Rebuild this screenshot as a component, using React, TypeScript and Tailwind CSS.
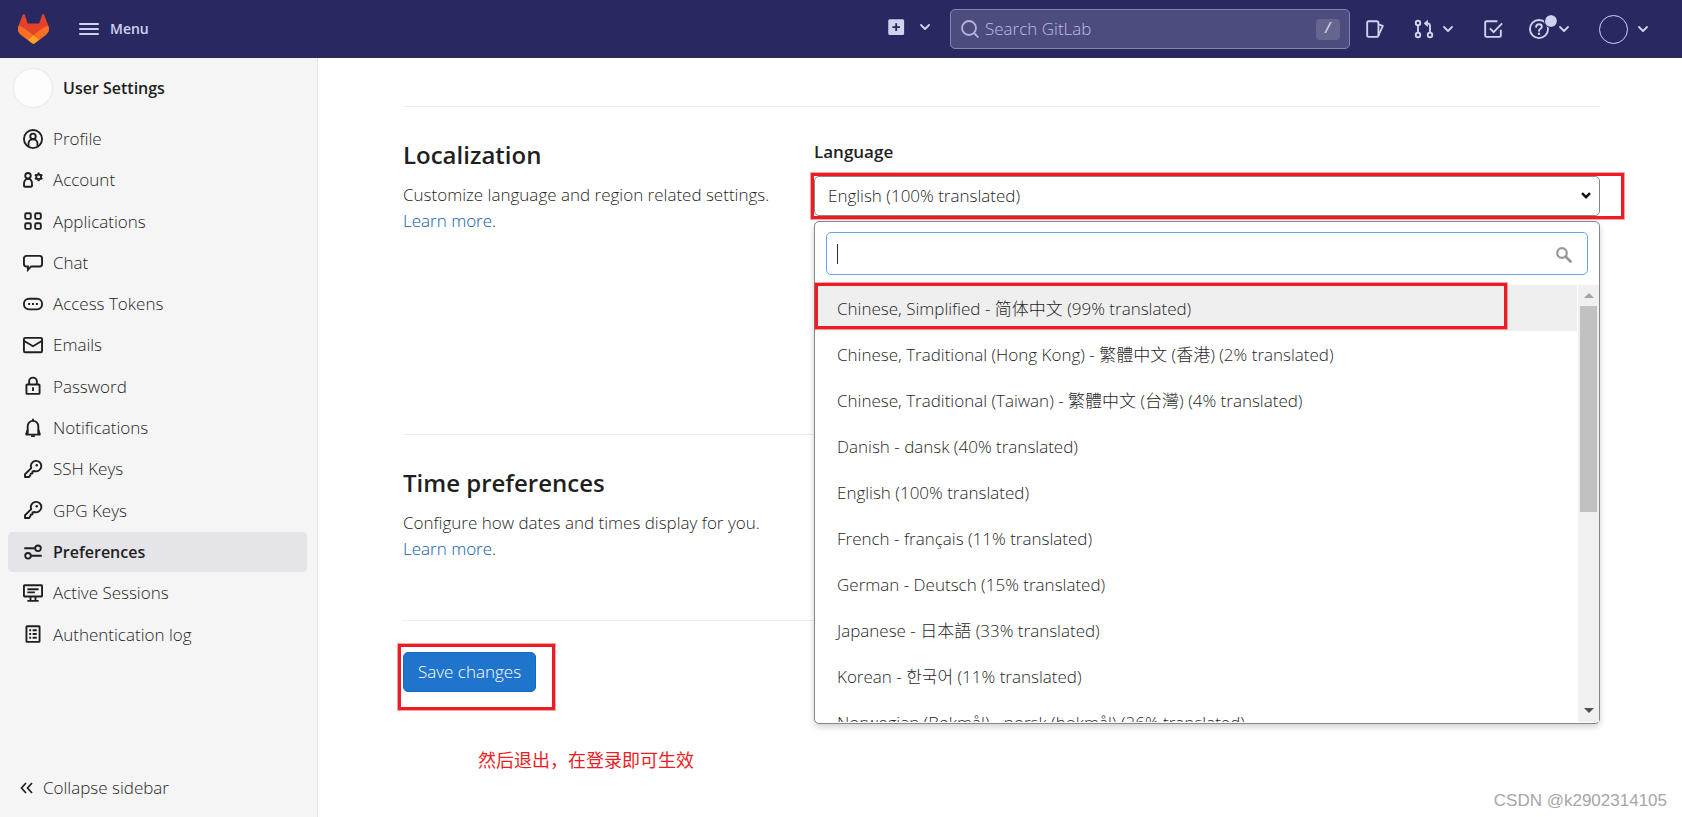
import type { ReactNode } from 'react'

interface IconProps {
  children: ReactNode
  className?: string
}

function Icon({ children, className = 'size-5' }: IconProps) {
  return (
    <svg
      viewBox="0 0 16 16"
      className={`shrink-0 ${className}`}
      fill="none"
      stroke="currentColor"
      strokeWidth="1.5"
      aria-hidden="true"
    >
      {children}
    </svg>
  )
}

function Chevron() {
  return (
    <svg viewBox="0 0 10 6" className="h-1.5 w-2.5 shrink-0" fill="none" stroke="currentColor" strokeWidth="1.8" aria-hidden="true">
      <path d="M1 1l4 4 4-4" strokeLinecap="round" strokeLinejoin="round" />
    </svg>
  )
}

function Logo() {
  return (
    <svg viewBox="0 0 25 24" className="h-[30px] w-[31px]" aria-hidden="true">
      <path
        fill="#E24329"
        d="m24.507 9.5-.034-.09L21.082.562a.896.896 0 0 0-1.694.091l-2.29 7.01H7.825L5.535.653a.898.898 0 0 0-1.694-.09L.451 9.411.416 9.5a6.297 6.297 0 0 0 2.09 7.278l.012.01.03.022 5.16 3.867 2.56 1.935 1.554 1.176a1.051 1.051 0 0 0 1.268 0l1.555-1.176 2.56-1.935 5.197-3.89.014-.01A6.297 6.297 0 0 0 24.507 9.5Z"
      />
      <path
        fill="#FC6D26"
        d="m24.507 9.5-.034-.09a11.44 11.44 0 0 0-4.56 2.051l-7.447 5.632 4.742 3.584 5.197-3.89.014-.01A6.297 6.297 0 0 0 24.507 9.5Z"
      />
      <path
        fill="#FCA326"
        d="m7.707 20.677 2.56 1.935 1.555 1.176a1.051 1.051 0 0 0 1.268 0l1.555-1.176 2.56-1.935-4.743-3.584-4.755 3.584Z"
      />
      <path
        fill="#FC6D26"
        d="M5.01 11.461a11.43 11.43 0 0 0-4.56-2.05L.416 9.5a6.297 6.297 0 0 0 2.09 7.278l.012.01.03.022 5.16 3.867 4.745-3.584-7.444-5.632Z"
      />
    </svg>
  )
}

const keyIcon = (
  <>
    <path d="M6.6 7.3A4.2 4.2 0 1 1 9 9.6L7.6 10v1.4l-1.4.4-.5 1.5-1 1.1H1.6v-2.2z" strokeLinejoin="round" />
    <circle cx="11" cy="5" r="1" fill="currentColor" stroke="none" />
  </>
)

const navItems: { label: string; icon: ReactNode; active?: boolean }[] = [
  {
    label: 'Profile',
    icon: (
      <>
        <circle cx="8" cy="8" r="7.25" />
        <circle cx="8" cy="5.9" r="2.2" />
        <path d="M4.4 14v-2.3c0-2 1.6-3.4 3.6-3.4s3.6 1.4 3.6 3.4V14" />
      </>
    ),
  },
  {
    label: 'Account',
    icon: (
      <>
        <circle cx="4" cy="4.6" r="2.2" />
        <path d="M.8 11c0-2.2 1.2-3.9 3.2-3.9S7.2 8.8 7.2 11v1.6a.8.8 0 0 1-.8.8H1.6a.8.8 0 0 1-.8-.8z" />
        <circle cx="12.5" cy="5.5" r="1.9" />
        <path d="M12.5 2v1.5M12.5 7.5V9M9.5 3.75l1.3.75M14.2 6.5l1.3.75M9.5 7.25l1.3-.75M14.2 4.5l1.3-.75" />
      </>
    ),
  },
  {
    label: 'Applications',
    icon: (
      <>
        <rect x="1.75" y="1.75" width="4.5" height="4.5" rx="1" />
        <rect x="9.75" y="1.75" width="4.5" height="4.5" rx="1" />
        <rect x="1.75" y="9.75" width="4.5" height="4.5" rx="1" />
        <rect x="9.75" y="9.75" width="4.5" height="4.5" rx="1" />
      </>
    ),
  },
  {
    label: 'Chat',
    icon: (
      <path d="M2.75 2.25h10.5a2 2 0 0 1 2 2v4.5a2 2 0 0 1-2 2H6.5L3.9 13.5v-2.75H2.75a2 2 0 0 1-2-2v-4.5a2 2 0 0 1 2-2z" />
    ),
  },
  {
    label: 'Access Tokens',
    icon: (
      <>
        <rect x=".75" y="3.75" width="14.5" height="8.5" rx="4" />
        <path d="M4.1 8h1.6M7.2 8h1.6M10.3 8h1.6" />
      </>
    ),
  },
  {
    label: 'Emails',
    icon: (
      <>
        <rect x=".75" y="2.25" width="14.5" height="11.5" rx="1" />
        <path d="M1 4.8l7 4.2 7-4.2" />
      </>
    ),
  },
  {
    label: 'Password',
    icon: (
      <>
        <rect x="2.75" y="6.75" width="10.5" height="7.5" rx=".5" />
        <path d="M4.9 6.5V4.4a3.1 3.1 0 0 1 6.2 0v2.1M8 9v3" />
      </>
    ),
  },
  {
    label: 'Notifications',
    icon: (
      <>
        <path d="M2 13.25h12M3.75 13V6.5a4.25 4.25 0 0 1 8.5 0V13M8 .5v2" />
        <path d="M3.75 9.5L2.5 13M12.25 9.5L13.5 13M6.5 14.5h3" />
      </>
    ),
  },
  { label: 'SSH Keys', icon: keyIcon },
  { label: 'GPG Keys', icon: keyIcon },
  {
    label: 'Preferences',
    active: true,
    icon: (
      <>
        <path d="M1 5h8.5M6.5 11H15" />
        <circle cx="12" cy="5" r="2.25" />
        <circle cx="4" cy="11" r="2.25" />
      </>
    ),
  },
  {
    label: 'Active Sessions',
    icon: (
      <>
        <rect x=".75" y="1.75" width="14.5" height="9" rx=".5" />
        <path d="M3.5 5h9M3.5 7.5h6M3.5 14.25h9M6 11v3M10 11v3" />
      </>
    ),
  },
  {
    label: 'Authentication log',
    icon: (
      <>
        <rect x="2.75" y="1.75" width="10.5" height="12.5" rx=".5" />
        <path d="M5 5h1.5M5 8h1.5M5 11h1.5M7.7 5H11M7.7 8H11M7.7 11H11" />
      </>
    ),
  },
]

const languages = [
  'Chinese, Simplified - 简体中文 (99% translated)',
  'Chinese, Traditional (Hong Kong) - 繁體中文 (香港) (2% translated)',
  'Chinese, Traditional (Taiwan) - 繁體中文 (台灣) (4% translated)',
  'Danish - dansk (40% translated)',
  'English (100% translated)',
  'French - français (11% translated)',
  'German - Deutsch (15% translated)',
  'Japanese - 日本語 (33% translated)',
  'Korean - 한국어 (11% translated)',
  'Norwegian (Bokmål) - norsk (bokmål) (26% translated)',
]

function Header() {
  return (
    <header className="flex h-[58px] shrink-0 items-center bg-[#292961] pr-[34px] pl-[18px] text-[#d1d1f0]">
      <a href="#" aria-label="GitLab">
        <Logo />
      </a>
      <button type="button" className="ml-[30px] flex items-center gap-[11px] text-sm font-semibold">
        <svg viewBox="0 0 20 14" className="h-3.5 w-5" stroke="currentColor" strokeWidth="2" strokeLinecap="round" aria-hidden="true">
          <path d="M1 2h18M1 7h18M1 12h18" />
        </svg>
        Menu
      </button>

      <div className="ml-auto flex items-center">
        <button type="button" aria-label="Create new" className="flex items-center gap-3.5 pb-1">
          <Icon>
            <path
              fill="currentColor"
              stroke="none"
              fillRule="evenodd"
              d="M3 1.7h10.3a1.2 1.2 0 0 1 1.2 1.2v10.3a1.2 1.2 0 0 1-1.2 1.2H3a1.2 1.2 0 0 1-1.2-1.2V2.9A1.2 1.2 0 0 1 3 1.7zM7.4 5v2.3H5.1v1.5h2.3v2.3h1.5V8.8h2.3V7.3H8.9V5z"
            />
          </Icon>
          <Chevron />
        </button>

        <label className="ml-5 flex h-10 w-[400px] items-center rounded-[5px] border border-[#8584b0] bg-[#4d4c7e] pr-[9px] pl-2.5">
          <svg viewBox="0 0 18 18" className="size-[18px] shrink-0" fill="none" stroke="#b5b4dc" strokeWidth="1.8" aria-hidden="true">
            <circle cx="8" cy="8" r="7" />
            <path d="M13 13l4.3 4.3" />
          </svg>
          <input
            type="text"
            aria-label="Search GitLab"
            placeholder="Search GitLab"
            className="ml-1.5 min-w-0 flex-1 bg-transparent text-[17px] outline-none placeholder:text-[#bfbee6]"
          />
          <kbd className="flex h-[21px] w-6 items-center justify-center rounded-[4px] bg-[#66658f] font-mono text-sm text-[#e5e5f7]">
            /
          </kbd>
        </label>

        <a href="#" aria-label="Issues" className="ml-[15px]">
          <Icon>
            <path d="M2.75 1.75h6.5a1.5 1.5 0 0 1 1.5 1.5v9.5a1.5 1.5 0 0 1-1.5 1.5h-6.5a1 1 0 0 1-1-1V2.75a1 1 0 0 1 1-1z" />
            <path d="M10.75 4.3l3.5 1.2-3.6 7.8" strokeLinejoin="round" />
          </Icon>
        </a>
        <button type="button" aria-label="Merge requests" className="ml-[29px] flex items-center gap-[9px]">
          <Icon>
            <circle cx="3.2" cy="3.2" r="1.8" />
            <circle cx="3.2" cy="12.8" r="1.8" />
            <circle cx="12.8" cy="12.8" r="1.8" />
            <path d="M3.2 5v6M12.8 11V5.5a2 2 0 0 0-2-2H8.5" />
            <path d="M10.8 1L8.2 3.5l2.6 2.5z" fill="currentColor" strokeWidth=".6" />
          </Icon>
          <Chevron />
        </button>
        <a href="#" aria-label="To-Do List" className="ml-[30px]">
          <Icon>
            <path d="M11.5 1.75H2.75a1 1 0 0 0-1 1v10.5a1 1 0 0 0 1 1h10.5a1 1 0 0 0 1-1V8.5" />
            <path d="M5.5 7.5l3 3 6.8-7" />
          </Icon>
        </a>
        <button type="button" aria-label="Help" className="relative ml-[26px] flex items-center gap-2.5">
          <Icon>
            <circle cx="8" cy="8" r="7.25" />
            <path d="M5.7 6.3c0-1.3 1-2.1 2.3-2.1s2.3.8 2.3 2c0 1.7-2.3 1.6-2.3 3.3" strokeLinecap="round" />
            <circle cx="8" cy="11.7" r="1" fill="currentColor" stroke="none" />
          </Icon>
          <span className="absolute -top-1 left-4 size-3 rounded-full bg-[#d1d1f0] outline-1 outline-[#292961]" />
          <Chevron />
        </button>
        <button type="button" aria-label="Account menu" className="ml-[30px] flex items-center gap-2.5">
          <span className="size-[29px] rounded-full border border-[#d1d1f0]" />
          <Chevron />
        </button>
      </div>
    </header>
  )
}

function Sidebar() {
  return (
    <aside className="flex w-[318px] shrink-0 flex-col border-r border-[#e6e6e6] bg-[#f5f5f5]">
      <a href="#" className="flex items-center gap-2.5 px-[13px] pt-2.5 text-base font-semibold">
        <span className="size-10 rounded-full border border-[#e8e8e8] bg-[#fdfdfd]" />
        User Settings
      </a>
      {/* rows share the height evenly */}
      <ul className="mt-[10px] grid h-[537px] auto-rows-fr pr-2.5 pl-2">
        {navItems.map((item) => (
          <li key={item.label} className="flex items-center">
            <a
              href="#"
              className={
                item.active
                  ? 'flex h-10 flex-1 items-center gap-2.5 rounded-[5px] bg-[#e4e4e9] px-[15px] text-base font-semibold'
                  : 'flex h-10 flex-1 items-center gap-2.5 px-[15px]'
              }
            >
              <Icon>{item.icon}</Icon>
              {item.label}
            </a>
          </li>
        ))}
      </ul>
      <button type="button" className="mt-auto flex h-[58px] items-center gap-2.5 pl-5 text-left">
        <svg viewBox="0 0 13 12" className="h-3 w-[13px]" fill="none" stroke="currentColor" strokeWidth="1.7" aria-hidden="true">
          <path d="M6 1L1.5 6 6 11M12 1L7.5 6l4.5 5" />
        </svg>
        Collapse sidebar
      </button>
    </aside>
  )
}

function LanguageMenu() {
  return (
    <div className="absolute inset-x-0 top-full mt-[5px] rounded-[5px] border border-[#868686] bg-white pb-px shadow-[0_3px_6px_rgba(0,0,0,0.18)]">
      <div className="relative px-[11px] py-2.5">
        <input
          type="text"
          aria-label="Search languages"
          className="block h-[43px] w-full rounded-[5px] border border-[#63a6e9] px-2.5 outline-none"
        />
        <span className="absolute top-[22px] left-[22px] h-5 w-px bg-[#303030]" />
        <svg viewBox="0 0 16 16" className="absolute top-[25px] right-[27px] size-4" fill="none" stroke="#999" aria-hidden="true">
          <circle cx="6" cy="6" r="4.8" strokeWidth="2.2" />
          <path d="M9.5 9.5l5 5" strokeWidth="2.8" strokeLinecap="round" />
        </svg>
      </div>
      <div className="relative flex h-[437px]">
        <ul role="listbox" aria-label="Language" className="flex-1 overflow-hidden">
          {languages.map((language, index) => (
            <li
              key={language}
              role="option"
              aria-selected={index === 0}
              className={
                index === 0
                  ? 'h-[46px] bg-[#efefef] pl-[22px] leading-[48px]'
                  : 'h-[46px] pl-[22px] leading-[48px]'
              }
            >
              {language}
            </li>
          ))}
        </ul>
        <div className="ml-px flex w-[21px] flex-col items-center bg-[#f0f0f0]">
          <svg viewBox="0 0 10 5" className="my-2 h-[5px] w-2.5" fill="#a3a3a3" aria-hidden="true">
            <path d="M0 5l5-5 5 5z" />
          </svg>
          <div className="h-[206px] w-[17px] bg-[#c1c1c1]" />
          <svg viewBox="0 0 10 5" className="mt-auto mb-[9px] h-[5px] w-2.5" fill="#505050" aria-hidden="true">
            <path d="M0 0l5 5 5-5z" />
          </svg>
        </div>
        <Mark className="-top-0.5 right-[92px] left-0 h-[46px]" />
      </div>
    </div>
  )
}

// Red frame drawn over the thing to click
function Mark({ className }: { className: string }) {
  return <span className={`pointer-events-none absolute border-[3px] border-[#ed1c24] ring-1 ring-[#ed1c24]/40 ${className}`} />
}

function SectionIntro({ title, text }: { title: string; text: string }) {
  return (
    <div className="col-span-4">
      <h4 className="text-[24px] leading-8 font-semibold">{title}</h4>
      <p className="mt-[11px] leading-[26px]">
        {text}
        <br />
        <a href="#" className="text-[#0b5cad]">
          Learn more
        </a>
        .
      </p>
    </div>
  )
}

export default function App() {
  return (
    <div className="flex min-h-screen flex-col bg-white font-['Open_Sans','Noto_Sans_CJK_SC',sans-serif] text-[17px] font-light text-[#1f1f1f]">
      <Header />
      <div className="flex flex-1">
        <Sidebar />
        <main className="relative flex-1 pt-12 pr-[82px] pl-[85px]">
          <section className="grid min-h-[328px] grid-cols-12 gap-x-9 border-t border-[#ececec] pt-8">
            <SectionIntro title="Localization" text="Customize language and region related settings." />
            <div className="col-span-8">
              <label htmlFor="language" className="block leading-[26px] font-semibold">
                Language
              </label>
              <div className="relative mt-[11px]">
                <select
                  id="language"
                  className="block h-10 w-full appearance-none rounded-[5px] border border-[#868686] bg-white px-[13px]"
                >
                  <option>English (100% translated)</option>
                </select>
                <svg
                  viewBox="0 0 10 7"
                  className="pointer-events-none absolute top-4 right-[9px] h-[7px] w-2.5"
                  fill="none"
                  stroke="#111"
                  strokeWidth="2.4"
                  aria-hidden="true"
                >
                  <path d="M1 1.2l4 4 4-4" />
                </svg>
                <LanguageMenu />
                <Mark className="-top-[3px] -right-6 -bottom-[3px] -left-[3px]" />
              </div>
            </div>
          </section>

          <section className="grid min-h-[186px] grid-cols-12 gap-x-9 border-t border-[#ececec] pt-8">
            <SectionIntro title="Time preferences" text="Configure how dates and times display for you." />
          </section>

          <section className="border-t border-[#ececec] pt-[31px]">
            <div className="relative inline-block">
              <button
                type="button"
                className="block h-10 rounded-[5px] border border-[#1068bf] bg-[#1f75cb] px-[14px] text-white"
              >
                Save changes
              </button>
              <Mark className="-top-2 -right-[19px] -bottom-[18px] -left-[5px]" />
            </div>
            <p className="mt-[50px] pl-[75px] text-[18px] leading-9 font-normal text-[#ed1c24]">然后退出，在登录即可生效</p>
          </section>

          <p className="absolute right-[15px] bottom-1 font-['Liberation_Sans',sans-serif] text-[17px] text-[#a6a6a6]">
            CSDN @k2902314105
          </p>
        </main>
      </div>
    </div>
  )
}
